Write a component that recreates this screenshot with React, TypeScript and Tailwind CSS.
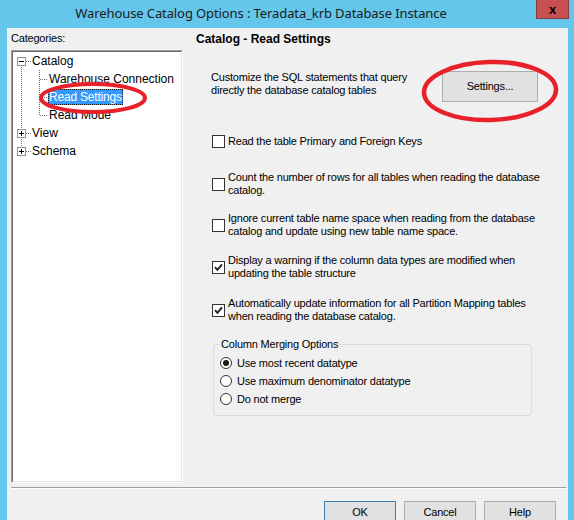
import React from "react";

type Option = { id: string; lines: string[]; checked: boolean; gap: string };

const readOptions: Option[] = [
  { id: "keys", lines: ["Read the table Primary and Foreign Keys"], checked: false, gap: "mt-[33px]" },
  {
    id: "rows",
    lines: ["Count the number of rows for all tables when reading the database", "catalog."],
    checked: false,
    gap: "mt-[23px]"
  },
  {
    id: "namespace",
    lines: [
      "Ignore current table name space when reading from the database",
      "catalog and update using new table name space."
    ],
    checked: false,
    gap: "mt-[15px]"
  },
  {
    id: "warn",
    lines: ["Display a warning if the column data types are modified when", "updating the table structure"],
    checked: true,
    gap: "mt-[16px]"
  },
  {
    id: "partition",
    lines: ["Automatically update information for all Partition Mapping tables", "when reading the database catalog."],
    checked: true,
    gap: "mt-[17px]"
  }
];

const mergeOptions = ["Use most recent datatype", "Use maximum denominator datatype", "Do not merge"];

function CheckBox({ checked }: { checked: boolean }) {
  return (
    <span className="flex h-[13px] w-[13px] shrink-0 items-center justify-center border border-[#333333] bg-white">
      {checked ? (
        <svg width="9" height="9" viewBox="0 0 9 9">
          <path d="M1 4.2 L3.4 6.8 L8 1.4" stroke="#1e1e1e" strokeWidth="1.9" fill="none" />
        </svg>
      ) : null}
    </span>
  );
}

function Radio({ selected }: { selected: boolean }) {
  return (
    <span className="flex h-[12px] w-[12px] shrink-0 items-center justify-center rounded-full border border-[#333333] bg-white">
      {selected ? <span className="h-[6px] w-[6px] rounded-full bg-[#1a1a1a]" /> : null}
    </span>
  );
}

// connector lines + expander boxes for the category tree
function TreeLines() {
  const dot = { stroke: "#6d6d6d", strokeWidth: 1, strokeDasharray: "1 1", shapeRendering: "crispEdges" as const };
  const box = (y: number, plus: boolean) => (
    <g shapeRendering="crispEdges">
      <rect x="4.5" y={y + 0.5} width="8" height="8" fill="white" stroke="#919191" />
      <line x1="6" y1={y + 4.5} x2="11" y2={y + 4.5} stroke="#000" />
      {plus ? <line x1="8.5" y1={y + 2} x2="8.5" y2={y + 7} stroke="#000" /> : null}
    </g>
  );
  return (
    <svg className="absolute inset-0" width="168" height="429">
      <line x1="8.5" y1="9" x2="8.5" y2="100" {...dot} />
      <line x1="9" y1="9.5" x2="18" y2="9.5" {...dot} />
      <line x1="9" y1="81.5" x2="18" y2="81.5" {...dot} />
      <line x1="9" y1="99.5" x2="18" y2="99.5" {...dot} />
      <line x1="26.5" y1="18" x2="26.5" y2="64" {...dot} />
      <line x1="27" y1="27.5" x2="35" y2="27.5" {...dot} />
      <line x1="27" y1="45.5" x2="35" y2="45.5" {...dot} />
      <line x1="27" y1="63.5" x2="35" y2="63.5" {...dot} />
      {box(5, false)}
      {box(77, true)}
      {box(95, true)}
    </svg>
  );
}

function CategoryTree() {
  return (
    <div className="mt-[5px] h-[433px] w-[172px] border border-b-white border-l-[#a0a0a0] border-r-white border-t-[#a0a0a0]">
      <div className="relative h-full w-full border border-b-[#e3e3e3] border-l-[#696969] border-r-[#e3e3e3] border-t-[#696969] bg-white text-[12px] leading-none tracking-normal">
        <TreeLines />
        <div className="relative">
          <div className="flex h-[18px] items-center pl-[19px]">Catalog</div>
          <div className="flex h-[18px] items-center pl-[35px]">
            <span className="border border-transparent">Warehouse Connection</span>
          </div>
          <div className="flex h-[18px] items-center pl-[35px]">
            <span className="flex h-[16px] items-center border border-dotted border-[#1a1a1a] bg-[#3399ff] tracking-[-0.2px] text-white">
              Read Settings
            </span>
          </div>
          <div className="flex h-[18px] items-center pl-[35px]">
            <span className="border border-transparent">Read Mode</span>
          </div>
          <div className="flex h-[18px] items-center pl-[19px]">View</div>
          <div className="flex h-[18px] items-center pl-[19px]">Schema</div>
        </div>
      </div>
    </div>
  );
}

function DialogButton({ label, primary }: { label: string; primary?: boolean }) {
  return (
    <button
      type="button"
      className={`h-[23px] w-[72px] border bg-[#e1e1e1] ${primary ? "border-[#3c7fb1]" : "border-[#adadad]"}`}
    >
      {label}
    </button>
  );
}

export default function App() {
  return (
    <div className="relative h-[520px] w-[574px] overflow-hidden bg-[#63c6ea] font-['Liberation_Sans',Arial,sans-serif] text-[11px] tracking-[-0.2px] text-black">
      {/* title bar */}
      <div className="flex h-[28px] items-start">
        <div className="flex h-[27px] w-[522px] items-center justify-center font-['Noto_Sans',sans-serif] text-[13px] tracking-[-0.1px] text-[#1b1b1b]">
          Warehouse Catalog Options : Teradata_krb Database Instance
        </div>
        <div className="ml-[14px] flex h-[19px] w-[33px] items-center justify-center border border-t-0 border-[#8a3a3a] bg-[#c75050] text-[13px] font-bold leading-none text-black">
          x
        </div>
      </div>

      <div className="ml-[7px] h-[492px] w-[561px] bg-[#f0f0f0]">
        <div className="flex h-[459px]">
          <div className="w-[176px] shrink-0 pl-[4px] pt-[4px]">
            <div className="h-[13px] leading-[13px]">Categories:</div>
            <CategoryTree />
          </div>

          <div className="ml-[7px] flex-1 pt-[5px] leading-[13px]">
            <div className="h-[13px] pl-[6px] text-[12px] font-bold tracking-normal">Catalog - Read Settings</div>

            <div className="mt-[25px] flex items-start">
              <div className="ml-[21px] w-[231px] whitespace-nowrap">
                <div>Customize the SQL statements that query</div>
                <div>directly the database catalog tables</div>
              </div>
              <button type="button" className="h-[31px] w-[96px] border border-[#adadad] bg-[#e1e1e1]">
                Settings...
              </button>
            </div>

            {readOptions.map((opt) => (
              <div key={opt.id} className={`${opt.gap} ml-[22px] flex items-center gap-[3px]`}>
                <CheckBox checked={opt.checked} />
                <div className="whitespace-nowrap">
                  {opt.lines.map((line) => (
                    <div key={line}>{line}</div>
                  ))}
                </div>
              </div>
            ))}

            <div className="relative ml-[23px] mt-[21px] h-[72px] w-[319px] rounded-[3px] border border-[#dcdcdc] pl-[6px] pt-[9px]">
              <span className="absolute -top-[7px] left-[6px] bg-[#f0f0f0] px-[1px]">Column Merging Options</span>
              {mergeOptions.map((label, i) => (
                <div key={label} className="flex h-[18px] items-center gap-[5px]">
                  <Radio selected={i === 0} />
                  <span>{label}</span>
                </div>
              ))}
            </div>
          </div>
        </div>

        <div className="ml-[4px] w-[555px] border-b border-t border-b-white border-t-[#a0a0a0]" />

        <div className="mt-[12px] flex justify-end gap-[8px] pr-[12px]">
          <DialogButton label="OK" primary />
          <DialogButton label="Cancel" />
          <DialogButton label="Help" />
        </div>
      </div>

      {/* red markup circles */}
      <svg className="pointer-events-none absolute inset-0" width="574" height="520">
        <ellipse cx="93" cy="98" rx="52" ry="14" fill="none" stroke="#e8202a" strokeWidth="4" />
        <ellipse
          cx="490"
          cy="91"
          rx="66"
          ry="29"
          fill="none"
          stroke="#e8202a"
          strokeWidth="4.5"
          transform="rotate(-1.5 490 91)"
        />
      </svg>
    </div>
  );
}
